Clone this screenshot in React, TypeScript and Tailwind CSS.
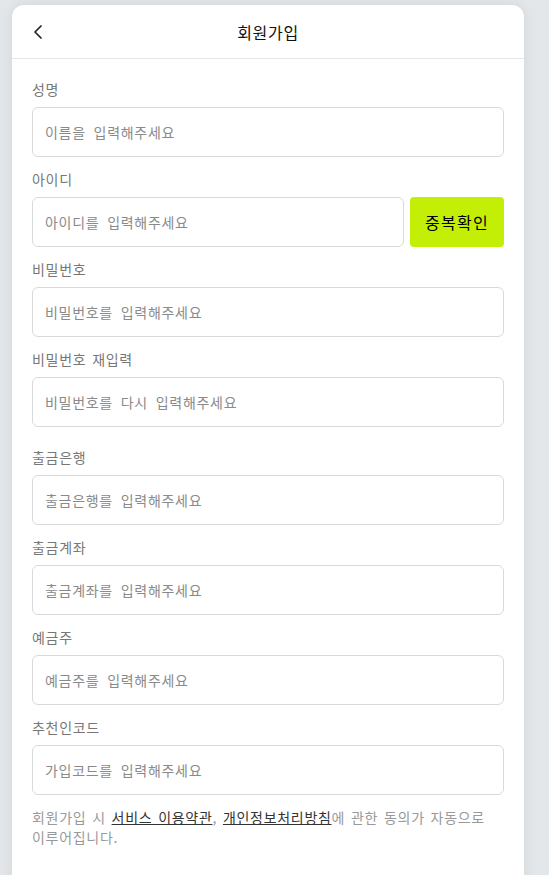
import { ChevronLeft } from 'lucide-react'

type Field = { id: string; label: string; placeholder: string; check?: boolean; gapTop?: boolean }

const fields: Field[] = [
    { id: 'name', label: '성명', placeholder: '이름을 입력해주세요' },
    { id: 'userId', label: '아이디', placeholder: '아이디를 입력해주세요', check: true },
    { id: 'pw', label: '비밀번호', placeholder: '비밀번호를 입력해주세요' },
    { id: 'pw2', label: '비밀번호 재입력', placeholder: '비밀번호를 다시 입력해주세요' },
    { id: 'bank', label: '출금은행', placeholder: '출금은행를 입력해주세요', gapTop: true },
    { id: 'account', label: '출금계좌', placeholder: '출금계좌를 입력해주세요' },
    { id: 'holder', label: '예금주', placeholder: '예금주를 입력해주세요' },
    { id: 'ref', label: '추천인코드', placeholder: '가입코드를 입력해주세요' },
]

export default function App () {
    return (
        <div
            className="min-h-screen bg-[#e4e7ea] pt-[5px] pl-3 tracking-[0.7px] [word-spacing:2px]"
            style={{ fontFamily: '"Noto Sans CJK KR", "Noto Sans", sans-serif' }}
        >
            <div className="w-[512px] min-h-[870px] bg-white rounded-t-xl shadow-[0_0_14px_rgba(0,0,0,0.08)]">
                <header className="relative h-[54px] flex items-center justify-center border-b border-[#e5e5e5]">
                    <button className="absolute left-[14px] top-1/2 -translate-y-1/2 text-[#222]">
                        <ChevronLeft className="h-6 w-6" strokeWidth={1.75} />
                    </button>
                    <h1 className="text-base text-[#111]">회원가입</h1>
                </header>

                <div className="px-5 pt-5 pb-10">
                    {fields.map((f, idx) => (
                        <div key={f.id} className={idx === 0 ? '' : f.gapTop ? 'mt-5' : 'mt-3'}>
                            <label htmlFor={f.id} className="block text-sm leading-5 text-[#777]">
                                {f.label}
                            </label>
                            <div className="mt-2 flex gap-[6px]">
                                <input
                                    id={f.id}
                                    type={f.id.startsWith('pw') ? 'password' : 'text'}
                                    placeholder={f.placeholder}
                                    className="h-[50px] flex-1 min-w-0 rounded-md border border-[#d9d9d9] px-3 text-sm tracking-[0.7px] [word-spacing:4px] text-[#222] placeholder:text-[#8a8a8a] outline-none"
                                />
                                {f.check && (
                                    <button className="h-[50px] w-[94px] shrink-0 rounded-[4px] bg-[#c2ef05] text-base tracking-[1.3px] text-black">
                                        중복확인
                                    </button>
                                )}
                            </div>
                        </div>
                    ))}

                    <p className="mt-3 text-sm leading-5 text-[#999] break-keep">
                        회원가입 시 <a href="#" className="underline text-[#333]">서비스 이용약관</a>,{' '}
                        <a href="#" className="underline text-[#333]">개인정보처리방침</a>에 관한 동의가 자동으로 이루어집니다.
                    </p>
                </div>
            </div>
        </div>
    )
}
